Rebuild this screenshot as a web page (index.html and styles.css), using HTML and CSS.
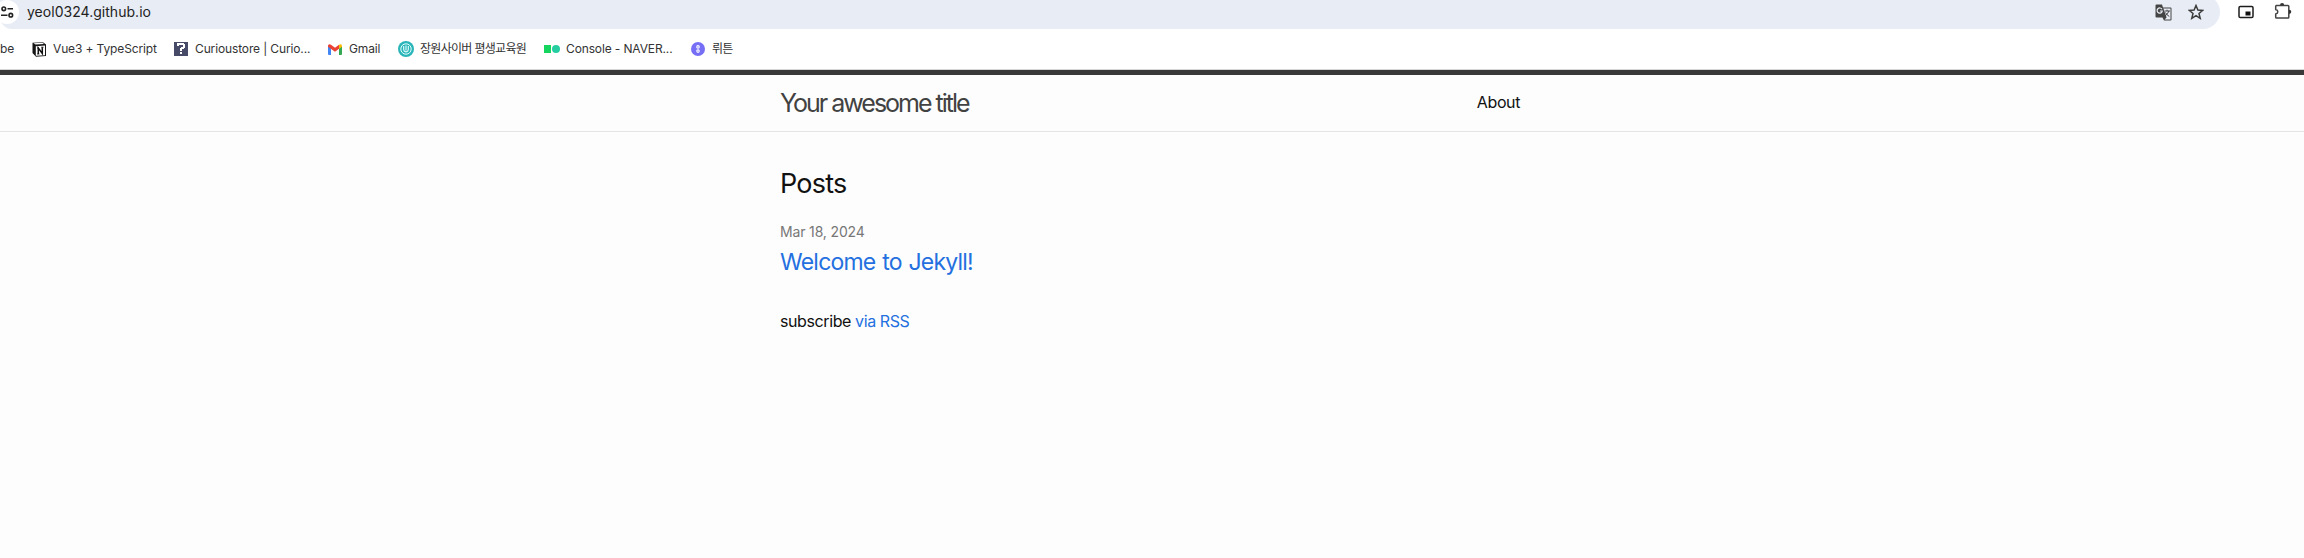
FILE: index.html
```html
<!DOCTYPE html>
<html lang="en">
<head>
<meta charset="utf-8">
<title>Your awesome title</title>
<link rel="stylesheet" href="styles.css">
</head>
<body>
<div class="toolbar">
  <div class="omnibox">
    <span class="site-info"><svg width="14" height="12" viewBox="0 0 14 12" fill="none" stroke="#222" stroke-width="1.6"><circle cx="3.8" cy="2.8" r="1.8"/><path d="M7.5 2.8H13M1 9.2H7.5"/><circle cx="10.8" cy="9.2" r="1.8"/></svg></span>
    <span class="url">yeol0324.github.io</span>
    <svg class="translate" width="17" height="17" viewBox="0 0 17 17"><path d="M1.5.5H7l1 3h7.5q1 0 1 1v11q0 1-1 1H9l-1.500-3h-6q-1 0-1-1v-11q0-1 1-1z" fill="#444"/><path d="M8.400 4.500h7.100v11H9.600l2-2z" fill="#e9edf6"/><path d="M7 5.300A2.600 2.600 0 1 0 7.300 7H4.900" fill="none" stroke="#e9edf6" stroke-width="1.200"/><path d="M9.500 7H15M12 5.700V7M13.800 7q-.8 3-3.700 5M10.500 8.500q1.300 2.500 3.800 4" fill="none" stroke="#444" stroke-width="1"/></svg>
    <svg class="star" width="16" height="16" viewBox="0 0 16 16"><path d="M8 1.500l1.900 4.500 4.800.4-3.700 3.100 1.200 4.800L8 11.700l-4.200 2.600L5 9.500 1.300 6.400l4.800-.4z" fill="none" stroke="#3c3c3c" stroke-width="1.500"/></svg>
  </div>
  <svg class="media" width="16" height="14" viewBox="0 0 16 14"><rect x="1" y="1.500" width="14" height="11" rx="1.300" fill="none" stroke="#1d1d1d" stroke-width="1.500"/><path d="M7.500 6.500h5v4h-5z" fill="#111"/></svg>
  <svg class="extensions" width="18" height="18" viewBox="0 0 18 18"><path d="M2 3.500h12q.8 0 .8.8v11q0 .8-.8.8H2.500q-.8 0-.8-.8V12q2.100-.5 2.100-2.200T1.700 7.600V4.300q0-.8.8-.8z" fill="none" stroke="#444" stroke-width="1.500"/><path d="M6 3.300a2.100 2.300 0 0 1 4.200 0zM15 7.700a2.300 2.100 0 0 1 0 4.200z" fill="#333"/></svg>
</div>
<div class="bookmarks">
  <span class="bookmark cut">be</span>
  <span class="bookmark notion"><svg width="15" height="15" viewBox="0 0 15 15"><path d="M.5.800L11 .200l3 2.200V14L4 14.700.500 11z" fill="#151515"/><path d="M3.800 4.200L13 3.600v9.600l-9.200.6z" fill="#fff"/><path d="M1.500 1.300l9-.5 1.500 1.200-8.500.6z" fill="#fff"/><path d="M6.300 12V6l4 5.500V5.200" fill="none" stroke="#111" stroke-width="1.500"/><path d="M5 6h1.800M5 12h2.400M9.300 5.200h2.200" fill="none" stroke="#111" stroke-width=".9"/></svg><span>Vue3 + TypeScript</span></span>
  <span class="bookmark curious"><svg width="14" height="14" viewBox="0 0 14 14" shape-rendering="crispEdges"><path d="M0 0h14v14H0z" fill="#484b68"/><path d="M3 1h7v1h1v4h-1v1H8v2H6V6h1V5h2V3H5v1H3zM6 10h2v2H6z" fill="#fff"/></svg><span>Curioustore | Curio...</span></span>
  <span class="bookmark gmail"><svg width="14" height="11" viewBox="0 0 14 11"><path d="M0 2h3v9H1q-1 0-1-1z" fill="#4285f4"/><path d="M11 2h3v8q0 1-1 1h-2z" fill="#34a853"/><path d="M0 1.500Q1-.7 3 .8l4 3 4-3v4L7 7.800 0 2.700z" fill="#ea4335"/><path d="M11 .8q2-1.500 3 .7v1.200l-3 2.200z" fill="#fbbc04"/></svg><span>Gmail</span></span>
  <span class="bookmark jangwon"><svg width="16" height="16" viewBox="0 0 16 16"><circle cx="8" cy="8" r="8" fill="#2ab5b9"/><circle cx="8" cy="8" r="5.200" fill="none" stroke="#e8ffff"/><path d="M5.700 5v3.500q0 2 2.300 2.500 2.300-.5 2.300-2.500V5M8 4.500v5" fill="none" stroke="#e8ffff" stroke-width="1.100"/></svg><span class="korean">장원사이버 평생교육원</span></span>
  <span class="bookmark naver"><svg width="16" height="8" viewBox="0 0 16 8"><path d="M0 0h7v8H0z" fill="#14d65f"/><circle cx="12" cy="4" r="4" fill="#25cda0"/></svg><span>Console - NAVER...</span></span>
  <span class="bookmark wrtn"><svg width="14" height="14" viewBox="0 0 14 14"><circle cx="7" cy="7" r="7" fill="#766ff6"/><circle cx="7" cy="4.900" r="1.800" fill="#fff"/><circle cx="7" cy="9.100" r="1.800" fill="#fff"/><circle cx="7" cy="4.900" r=".7" fill="#766ff6"/><circle cx="7" cy="9.100" r=".7" fill="#766ff6"/></svg><span class="korean">뤼튼</span></span>
</div>
<header class="site-header">
  <div class="wrapper header-row">
    <a class="site-title">Your awesome title</a>
    <nav class="site-nav"><a>About</a></nav>
  </div>
</header>
<main class="wrapper content">
  <h1 class="heading">Posts</h1>
  <div class="post-meta">Mar 18, 2024</div>
  <h2 class="post-title"><a class="link">Welcome to Jekyll!</a></h2>
  <p class="subscribe">subscribe <a class="link">via RSS</a></p>
</main>
</body>
</html>
```
FILE: styles.css
```css
* { box-sizing: border-box; }
body {
  margin: 0;
  height: 558px;
  overflow: hidden;
  background: #fdfdfd;
  color: #111;
  font: 16px/24px Inter, "Noto Sans CJK KR", sans-serif;
}
svg { display: block; flex: none; }
.toolbar {
  display: flex;
  height: 29px;
  background: #fff;
  overflow: hidden;
}
.omnibox {
  display: flex;
  align-items: center;
  width: 2220px;
  height: 34px;
  margin-top: -5px;
  background: #e8ecf5;
  border-radius: 0 17px 17px 12px;
}
.site-info {
  display: flex;
  align-items: center;
  width: 24px;
  height: 24px;
  margin-left: -5px;
  padding-left: 5px;
  border-radius: 50%;
  background: #fff;
}
.url {
  margin-left: 8px;
  font-size: 14px;
  line-height: 18px;
  letter-spacing: 0.03px;
  color: #222;
}
.translate { margin-left: auto; }
.star { margin: 0 16px; }
.media { margin: 5px 0 0 18px; }
.extensions { margin: 2px 0 0 20px; }
.bookmarks {
  display: flex;
  align-items: center;
  height: 41px;
  background: #fff;
  border-bottom: 1px solid #d6d6d6;
  color: #333;
  font-size: 12px;
  line-height: 16px;
  letter-spacing: -0.13px;
  white-space: nowrap;
}
.bookmark {
  display: flex;
  align-items: center;
  gap: 7px;
}
.korean { letter-spacing: -0.7px; }
.cut { width: 32px; }
.notion { width: 142px; gap: 6px; }
.curious { width: 154px; }
.gmail { width: 70px; }
.jangwon { width: 146px; gap: 6px; }
.naver { width: 147px; gap: 6px; }
.site-header {
  height: 62px;
  background: #fdfdfd;
  border-top: 5px solid #393939;
  border-bottom: 1px solid #e4e4e4;
}
.wrapper { width: 744px; margin: 0 auto; }
.header-row {
  display: flex;
  align-items: center;
  justify-content: space-between;
  height: 56px;
}
.site-title {
  padding-top: 1px;
  color: #424242;
  font-size: 25px;
  line-height: 55px;
  letter-spacing: -2px;
}
.site-nav {
  margin-right: 4px;
  padding-bottom: 2px;
  letter-spacing: -0.4px;
}
.content { padding-top: 31px; }
.heading {
  margin: 0;
  font-size: 27px;
  line-height: 42px;
  font-weight: 400;
  letter-spacing: -0.8px;
}
.post-meta {
  margin-top: 15px;
  font-size: 14px;
  line-height: 24px;
  letter-spacing: -0.15px;
  color: #777;
}
.post-title {
  margin: 0;
  font-size: 23px;
  line-height: 36px;
  font-weight: 400;
  letter-spacing: -0.78px;
  word-spacing: 1px;
}
.subscribe {
  margin: 29px 0 0;
  letter-spacing: -0.4px;
}
.link { color: #2470e0; }
```
